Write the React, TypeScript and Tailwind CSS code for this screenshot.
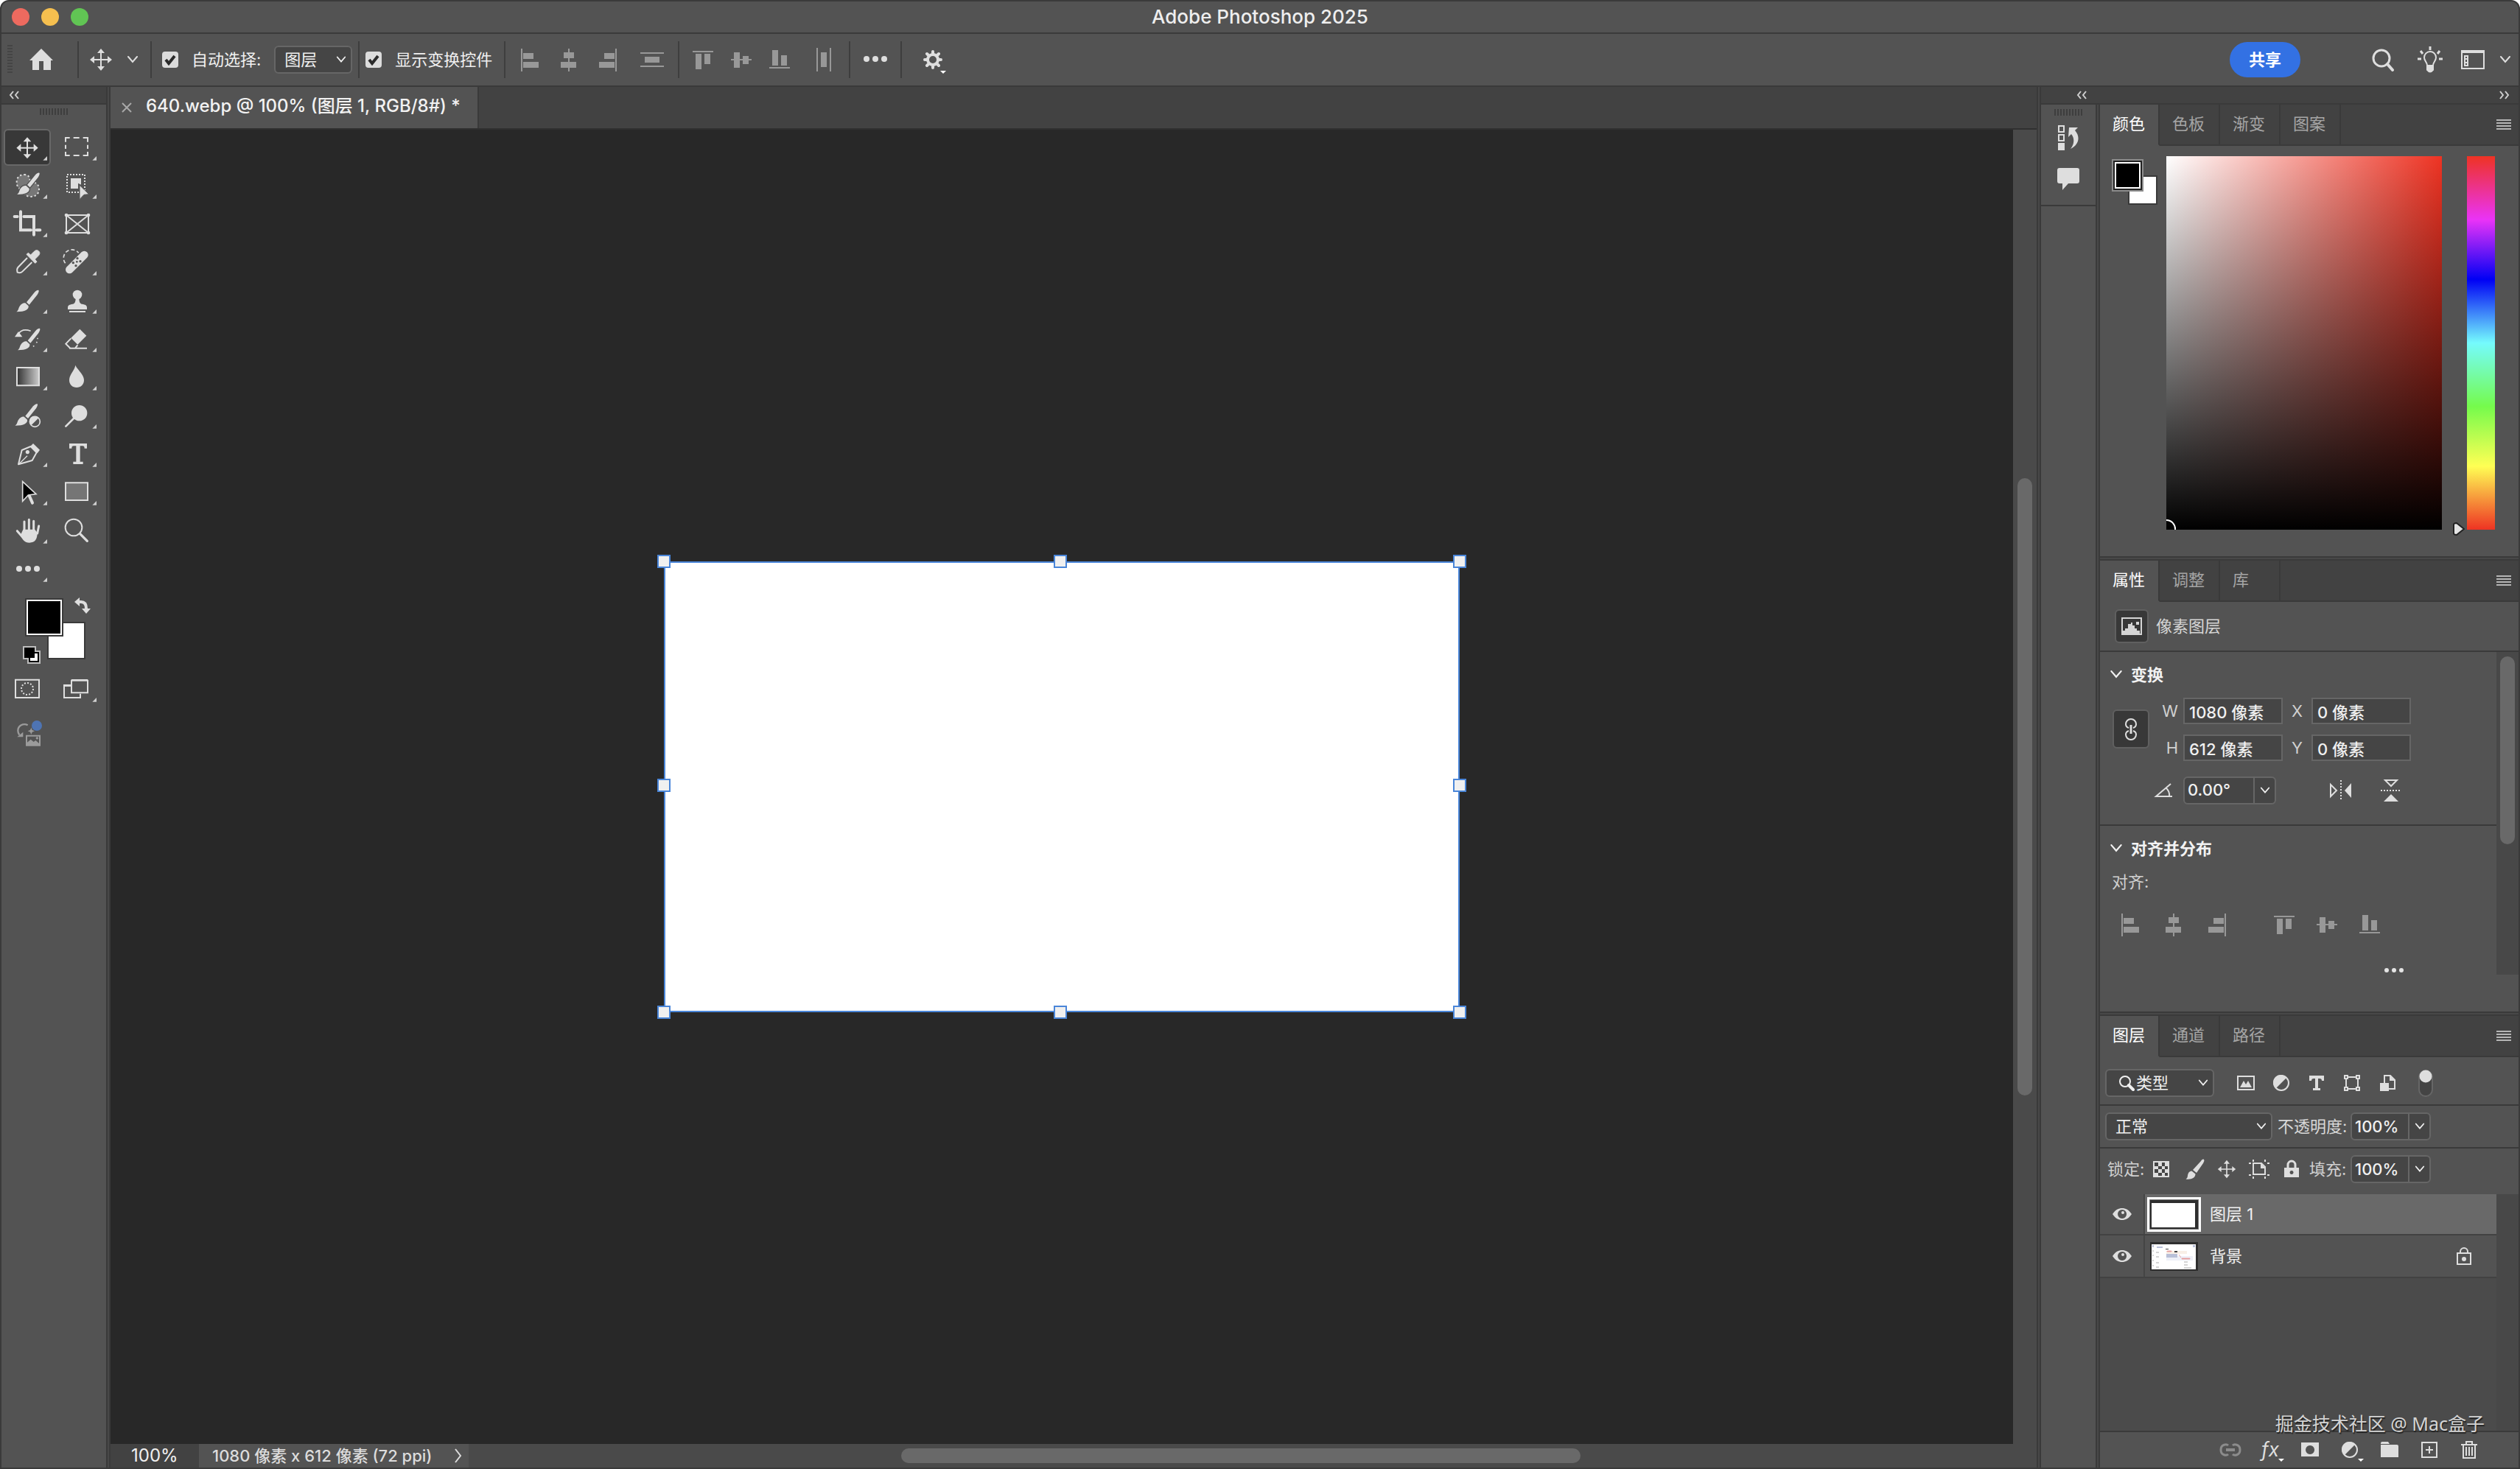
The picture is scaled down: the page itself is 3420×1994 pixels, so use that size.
import { useState } from 'react';
import type { ReactNode } from 'react';
import clsx from 'clsx';

type IconProps = { children: ReactNode; className?: string };

// 32x32 drawing used by the bars and the panels
function Icon({ children, className }: IconProps) {
  return (
    <svg viewBox="0 0 32 32" className={clsx('size-8 shrink-0', className)} fill="currentColor" aria-hidden="true">
      {children}
    </svg>
  );
}

function Chevron({ className }: { className?: string }) {
  return (
    <svg viewBox="0 0 16 10" className={clsx('h-[10px] w-4 shrink-0', className)} fill="none" stroke="currentColor" strokeWidth="2" strokeLinecap="round" aria-hidden="true">
      <path d="M2 1l6 7 6-7" />
    </svg>
  );
}

function DoubleChevron({ right }: { right?: boolean }) {
  return (
    <svg viewBox="0 0 14 12" className="h-3 w-[14px] text-[#d0d0d0]" fill="none" stroke="currentColor" strokeWidth="2" aria-hidden="true">
      {right ? <path d="M1 1l4 5-4 5M8 1l4 5-4 5" /> : <path d="M6 1L2 6l4 5M13 1L9 6l4 5" />}
    </svg>
  );
}

function Grip() {
  return <div className="mx-auto h-[9px] w-[38px] bg-[repeating-linear-gradient(to_right,#3e3e3e_0_2px,transparent_2px_4px)]" />;
}

const MovePath = () => (
  <>
    <path d="M16 4v24M4 16h24" stroke="currentColor" strokeWidth="2" />
    <path d="M16 1l5 6H11zM16 31l5-6H11zM1 16l6-5v10zM31 16l-6-5v10z" />
  </>
);

const alignIcons = {
  left: <path d="M3 1h2v31H3zM6 7h14v8H6zM6 19h21v8H6z" />,
  centerH: <path d="M15 1h2v5h6v8h-6v5h9v8h-9v5h-2v-5H5v-8h10v-5H9V6h6z" />,
  right: <path d="M27 1h2v31h-2zM12 7h14v8H12zM5 19h21v8H5z" />,
  distV: <path d="M0 6h32v2H0zM6 12h20v8H6zM0 24h32v2H0z" />,
  top: <path d="M2 4h28v2H2zM6 8h8v21H6zM18 8h8v14h-8z" />,
  centerV: <path d="M6 6h8v9h4v-4h8v4h4v2h-4v5h-8v-5h-4v10H6V17H2v-2h4z" />,
  bottom: <path d="M2 26h28v2H2zM6 3h8v21H6zM18 10h8v14h-8z" />,
  distH: <path d="M6 0h2v32H6zM24 0h2v32h-2zM12 6h8v20h-8z" />,
};

const HalfCircle = () => (
  <>
    <circle cx="16" cy="16" r="10" fill="none" stroke="currentColor" strokeWidth="2" />
    <path d="M23 9A10 10 0 1 0 9 23z" />
  </>
);

const TypeGlyph = () => (
  <path d="M6 6h20v7h-3c0-2-1-3-3-3h-2v13h3v3H11v-3h3V10h-2c-2 0-3 1-3 3H6z" />
);

const BrushGlyph = () => (
  <path d="M29 3c1 1 0 3-1 5l-9 13-5-4L25 5c1-2 3-3 4-2zM12.500 18.500l5 4c0 5-5 8-13 7 3-2 2-4 3-7 1-3 3-4 5-4z" />
);

/* ---------- tools ---------- */

// Tool drawings live on a 192x156 grid, one grid per cell
const toolBrush = (
  <>
    <path d="M145 26c-3-2-10 2-17 9l-32 40 11 10 33-41c5-8 8-16 5-18z" />
    <path d="M91 78l13 12c2 14-12 24-50 24 10-6 8-14 14-23 6-9 14-14 23-13z" />
  </>
);

type Tool = { name: string; icon: ReactNode; flyout?: boolean };

const tools: Tool[] = [
  {
    name: '移动工具',
    flyout: true,
    icon: (
      <>
        <path d="M96 50v60M66 80h60" stroke="currentColor" strokeWidth="6" />
        <path d="M96 37l16 18H80zM96 124l16-18H80zM52 80l18-16v32zM140 80l-18-16v32z" />
      </>
    ),
  },
  {
    name: '矩形选框工具',
    flyout: true,
    icon: <path d="M51 56V39h17M83 39h24M122 39h19v17M141 68v16M141 96v15h-19M107 111H83M68 111H51V96M51 84V68" fill="none" stroke="currentColor" strokeWidth="6" />,
  },
  {
    name: '选择画笔工具',
    flyout: true,
    icon: (
      <>
        <path d="M83 33c20 0 26 14 23 30 20-2 38 8 38 28s-14 32-34 32-32-14-34-30C58 92 53 78 53 62s12-29 30-29z" fill="#777" stroke="currentColor" strokeWidth="6" strokeDasharray="7 9" />
        <g stroke="#535353" strokeWidth="8" paintOrder="stroke">{toolBrush}</g>
      </>
    ),
  },
  {
    name: '对象选择工具',
    flyout: true,
    icon: (
      <>
        <path d="M57 33h72v72H57z" fill="none" stroke="currentColor" strokeWidth="6" strokeDasharray="6 6" />
        <path d="M72 48h42v26l-12-6v22H72z" />
        <path d="M108 76l38 37-20 2-18 19z" stroke="#535353" strokeWidth="3" />
      </>
    ),
  },
  {
    name: '裁剪工具',
    flyout: true,
    icon: <path d="M69 28v75h42M134 103h14M44 48h12M82 48h41v74" fill="none" stroke="currentColor" strokeWidth="12" strokeLinecap="round" />,
  },
  {
    name: '图框工具',
    icon: (
      <>
        <path d="M54 42h90v72H54zM54 42l90 72M144 42l-90 72" fill="none" stroke="currentColor" strokeWidth="6" />
        <circle cx="54" cy="42" r="7" /><circle cx="144" cy="42" r="7" /><circle cx="54" cy="114" r="7" /><circle cx="144" cy="114" r="7" />
      </>
    ),
  },
  {
    name: '吸管工具',
    flyout: true,
    icon: (
      <>
        <path d="M96 60L58 99c-6 7-4 12-2 20 7 3 14 3 20-3l39-38" fill="none" stroke="currentColor" strokeWidth="6" />
        <path d="M93 46l7-6 10 8 14-14c7-7 14-6 19-1s5 12-2 19l-14 14 8 10-7 6z" strokeLinejoin="round" stroke="currentColor" strokeWidth="3" />
      </>
    ),
  },
  {
    name: '污点修复画笔工具',
    flyout: true,
    icon: (
      <>
        <path d="M50 82a34 34 0 1 1 54-42" fill="none" stroke="currentColor" strokeWidth="5" strokeDasharray="15 9" />
        <path d="M67 108l60-60" stroke="currentColor" strokeWidth="32" strokeLinecap="round" />
        <g fill="#535353"><circle cx="99" cy="62" r="5" /><circle cx="111" cy="74" r="5" /><circle cx="82" cy="80" r="5" /><circle cx="97" cy="76" r="4" /><circle cx="93" cy="92" r="5" /></g>
      </>
    ),
  },
  { name: '画笔工具', flyout: true, icon: <g transform="translate(-3 10)">{toolBrush}</g> },
  {
    name: '仿制图章工具',
    flyout: true,
    icon: (
      <>
        <circle cx="99" cy="54" r="19" />
        <path d="M92 68h14c0 12 2 22 12 24 14 2 20 6 20 14v8H60v-8c0-8 6-12 20-14 10-2 12-12 12-24z" />
        <path d="M66 123h66" stroke="currentColor" strokeWidth="6" />
      </>
    ),
  },
  {
    name: '历史记录画笔工具',
    flyout: true,
    icon: (
      <>
        <g transform="translate(2 10)">{toolBrush}</g>
        <path d="M60 58c10-16 28-20 50-12" fill="none" stroke="currentColor" strokeWidth="5" />
        <path d="M45 70l15-22 16 22z" />
        <path d="M138 74v8M136 90l-4 6M124 106l-8 6" stroke="currentColor" strokeWidth="5" strokeDasharray="5 5" />
      </>
    ),
  },
  {
    name: '橡皮擦工具',
    flyout: true,
    icon: (
      <>
        <path d="M109 38l27 27-36 36-27-27z" />
        <path d="M73 76L52 98l18 18h20l10-13M66 116h72" fill="none" stroke="currentColor" strokeWidth="6" />
      </>
    ),
  },
  {
    name: '渐变工具',
    flyout: true,
    icon: (
      <>
        <defs>
          <linearGradient id="toolGradient"><stop offset="0" stopColor="#333" /><stop offset="1" stopColor="#ccc" /></linearGradient>
        </defs>
        <path d="M54 39h90v73H54z" fill="url(#toolGradient)" stroke="currentColor" strokeWidth="6" />
      </>
    ),
  },
  { name: '模糊工具', flyout: true, icon: <path d="M91 29c6 16 35 38 35 61 0 18-13 30-30 30S66 108 66 90c0-23 22-40 25-61z" /> },
  {
    name: '调整画笔工具',
    icon: (
      <>
        <g transform="translate(-8 5)">{toolBrush}</g>
        <circle cx="127" cy="103" r="25" fill="#535353" />
        <circle cx="127" cy="103" r="21" fill="none" stroke="currentColor" strokeWidth="5" />
        <path d="M141 89a20 20 0 1 0-28 28z" />
      </>
    ),
  },
  {
    name: '减淡工具',
    flyout: true,
    icon: (
      <>
        <circle cx="107" cy="68" r="32" />
        <path d="M52 122l32-32" stroke="currentColor" strokeWidth="8" strokeLinecap="round" />
      </>
    ),
  },
  {
    name: '钢笔工具',
    flyout: true,
    icon: (
      <>
        <path d="M60 121l14-58 36-15 24 25-18 32z" fill="none" stroke="currentColor" strokeWidth="6" strokeLinejoin="round" />
        <path d="M120 36l27 26-10 14-29-28zM97 79a8 8 0 1 1 .100 0z" />
        <path d="M62 120l34-34" stroke="currentColor" strokeWidth="4" />
      </>
    ),
  },
  { name: '文字工具', flyout: true, icon: <path d="M66 36h72v20h-10c0-7-2-10-8-10h-10v64h12v10H82v-10h12V46H84c-6 0-8 3-8 10H66z" /> },
  {
    name: '路径选择工具',
    flyout: true,
    icon: (
      <>
        <path d="M102 88l15 34" stroke="currentColor" strokeWidth="12" strokeLinecap="round" />
        <path d="M77 35l55 51-32 4-23 25z" fill="#000" stroke="currentColor" strokeWidth="5" />
      </>
    ),
  },
  { name: '矩形工具', flyout: true, icon: <path d="M51 40h90v71H51z" fill="#757575" stroke="currentColor" strokeWidth="6" /> },
  {
    name: '抓手工具',
    flyout: true,
    icon: (
      <>
        <path d="M84 84V42M103 84V34M122 84V40M137 90l6-30M76 104L55 80" stroke="currentColor" strokeWidth="9" strokeLinecap="round" />
        <path d="M79 74h48l10 14c0 26-10 40-32 40-20 0-30-12-36-32z" />
      </>
    ),
  },
  {
    name: '缩放工具',
    icon: (
      <>
        <circle cx="84" cy="66" r="34" fill="none" stroke="currentColor" strokeWidth="6" />
        <path d="M110 92l29 29" stroke="currentColor" strokeWidth="10" strokeLinecap="round" />
      </>
    ),
  },
  { name: '编辑工具栏', flyout: true, icon: <><circle cx="63" cy="78" r="12" /><circle cx="99" cy="78" r="12" /><circle cx="135" cy="78" r="12" /></> },
];

const screenTools: Tool[] = [
  {
    name: '快速蒙版',
    icon: (
      <>
        <path d="M48 41h96v73H48z" fill="none" stroke="currentColor" strokeWidth="6" />
        <circle cx="96" cy="78" r="24" fill="none" stroke="currentColor" strokeWidth="6" strokeDasharray="6 6.500" />
      </>
    ),
  },
  {
    name: '屏幕模式',
    flyout: true,
    icon: <path d="M75 44h66v50H75zM72 63H45v51h66V98M75 42h66M45 66h27" fill="none" stroke="currentColor" strokeWidth="6" />,
  },
];

function ToolCell({ tool, selected, onSelect }: { tool: Tool; selected?: boolean; onSelect?: () => void }) {
  return (
    <button
      type="button"
      aria-label={tool.name}
      onClick={onSelect}
      className={clsx('my-px h-[50px] w-16 rounded-md border-2', selected ? 'border-[#686868] bg-[#383838]' : 'border-transparent')}
    >
      <svg viewBox="6 9 180 138" className="h-[46px] w-[60px]" fill="currentColor" aria-hidden="true">
        {tool.icon}
        {tool.flyout && <path d="M177 114v17h-17z" fill="#cfcfcf" />}
      </svg>
    </button>
  );
}

function Toolbox() {
  const [active, setActive] = useState('移动工具');

  return (
    <aside className="flex w-[142px] shrink-0 flex-col bg-[#535353] text-[#dedede]">
      <div className="flex h-6 items-center border-b-2 border-[#3a3a3a] bg-[#424242] pl-2.5">
        <DoubleChevron />
      </div>
      <div className="py-[5px]"><Grip /></div>
      <div className="mt-[13px] grid grid-cols-[67px_64px] pl-[3px]">
        {tools.map((tool) => (
          <ToolCell key={tool.name} tool={tool} selected={active === tool.name} onSelect={() => setActive(tool.name)} />
        ))}
      </div>
      <button type="button" aria-label="前景色和背景色" className="h-[111px] w-[142px]">
        <svg viewBox="2 798 142 111" className="h-[111px] w-[142px]" aria-hidden="true">
          <path d="M64 844h52v51H64z" fill="#3a3a3a" />
          <path d="M66 846h48v47H66z" fill="#fff" />
          <path d="M34 812h52v52H34z" fill="#3a3a3a" />
          <path d="M36 814h48v48H36z" fill="#fff" />
          <path d="M38 816h44v44H38z" />
          <path d="M107 817h3q7 0 7 9v3" fill="none" stroke="#dedede" strokeWidth="4" />
          <path d="M101 817l7-6v12zM117 833l-6-7h12z" fill="#dedede" />
          <path d="M31 877h18v6h6v18H37v-6h-6z" fill="#bdbdbd" />
          <path d="M39 885h14v14H39z" />
          <path d="M41 887h10v10H41z" fill="#fff" />
          <path d="M33 879h14v14H33z" />
        </svg>
      </button>
      <div className="grid grid-cols-[67px_64px] pl-[3px]">
        {screenTools.map((tool) => <ToolCell key={tool.name} tool={tool} />)}
      </div>
      <button type="button" aria-label="生成式图像" className="mt-2 ml-[3px] h-[52px] w-16">
        <svg viewBox="0 0 192 156" className="h-[52px] w-16" fill="#9b9b9b" aria-hidden="true">
          <path d="M98 46c-18-10-40 2-40 22 0 8 2 12 6 18" fill="none" stroke="#9b9b9b" strokeWidth="7" />
          <path d="M55 94h24V74z" />
          <path d="M112 56l4 10 10 4-10 4-4 10-4-10-10-4 10-4z" />
          <path d="M90 86h60v45H90zM96 92v24l14-12 12 10 8-6 14 12V92zM136 94a5 5 0 1 1-.100 0z" fillRule="evenodd" />
          <circle cx="135" cy="48" r="21" fill="#4e74b3" />
        </svg>
      </button>
    </aside>
  );
}

/* ---------- options bar ---------- */

function Divider() {
  return <div className="h-[50px] w-0.5 shrink-0 bg-[#3e3e3e]" />;
}

function IconButton({ label, className, children }: { label: string; className: string; children: ReactNode }) {
  return (
    <button type="button" aria-label={label} className={clsx('flex h-10 shrink-0 items-center justify-center', className)}>
      {children}
    </button>
  );
}

function CheckBox({ id, label }: { id: string; label: string }) {
  return (
    <div className="flex shrink-0 items-center gap-[18px]">
      <span className="grid">
        <input id={id} type="checkbox" defaultChecked className="peer col-start-1 row-start-1 size-[22px] appearance-none rounded bg-[#dcdcdc]" />
        <svg viewBox="0 0 22 22" className="pointer-events-none invisible col-start-1 row-start-1 size-[22px] peer-checked:visible" fill="none" stroke="#2b2b2b" strokeWidth="4" aria-hidden="true">
          <path d="M5 11l4 5 8-10" />
        </svg>
      </span>
      <label htmlFor={id} className="text-[22px] leading-8 whitespace-nowrap text-[#f0f0f0]">{label}</label>
    </div>
  );
}

function SelectBox({ label, options, className, icon }: { label: string; options: string[]; className: string; icon?: ReactNode }) {
  return (
    <div className={clsx('flex h-[38px] shrink-0 items-center rounded-md border-2 border-[#666] bg-[#454545] text-[#f0f0f0]', className)}>
      {icon}
      <select aria-label={label} className="min-w-0 flex-1 appearance-none bg-transparent text-[22px] leading-8 outline-none">
        {options.map((option) => <option key={option}>{option}</option>)}
      </select>
      <Chevron className="h-[9px] w-[14px]" />
    </div>
  );
}

function OptionsBar() {
  return (
    <div className="flex h-[72px] shrink-0 items-center border-b-2 border-[#3a3a3a] bg-[#535353] text-[#dedede]">
      <div className="ml-2 h-10 w-[7px] bg-[repeating-linear-gradient(to_bottom,#454545_0_2px,transparent_2px_4px)]" />
      <IconButton label="主页" className="ml-[11px] w-[56px]">
        <Icon><path d="M16 1l16 16h-3v13H19V18h-6v12H4V17H0z" /></Icon>
      </IconButton>
      <div className="ml-[21px]"><Divider /></div>
      <IconButton label="移动工具预设" className="ml-3 w-9"><Icon><MovePath /></Icon></IconButton>
      <IconButton label="打开预设" className="ml-[13px] w-6"><Chevron /></IconButton>
      <div className="mr-[14px] ml-3"><Divider /></div>
      <CheckBox id="auto-select" label="自动选择:" />
      <div className="ml-[18px]"><SelectBox label="自动选择对象" options={['图层', '组']} className="w-[106px] pr-1.5 pl-3" /></div>
      <div className="mr-2 ml-2"><Divider /></div>
      <CheckBox id="show-transform" label="显示变换控件" />
      <div className="mr-2 ml-4"><Divider /></div>
      <div className="flex text-[#989898]">
        <IconButton label="左对齐" className="w-[52px]"><Icon>{alignIcons.left}</Icon></IconButton>
        <IconButton label="水平居中对齐" className="w-[52px]"><Icon>{alignIcons.centerH}</Icon></IconButton>
        <IconButton label="右对齐" className="w-[52px]"><Icon>{alignIcons.right}</Icon></IconButton>
        <IconButton label="垂直分布" className="w-[70px]"><Icon>{alignIcons.distV}</Icon></IconButton>
      </div>
      <div className="mr-1.5"><Divider /></div>
      <div className="flex text-[#989898]">
        <IconButton label="顶对齐" className="w-[52px]"><Icon>{alignIcons.top}</Icon></IconButton>
        <IconButton label="垂直居中对齐" className="w-[52px]"><Icon>{alignIcons.centerV}</Icon></IconButton>
        <IconButton label="底对齐" className="w-[52px]"><Icon>{alignIcons.bottom}</Icon></IconButton>
        <IconButton label="水平分布" className="w-[68px]"><Icon>{alignIcons.distH}</Icon></IconButton>
      </div>
      <Divider />
      <IconButton label="更多对齐选项" className="w-[68px]">
        <Icon><circle cx="4" cy="15" r="4" /><circle cx="16" cy="15" r="4" /><circle cx="28" cy="15" r="4" /></Icon>
      </IconButton>
      <Divider />
      <IconButton label="设置" className="ml-[26px] w-9">
        <svg viewBox="0 0 36 40" className="h-10 w-9" fill="currentColor" aria-hidden="true">
          <circle cx="16" cy="20" r="7" fill="none" stroke="currentColor" strokeWidth="4" />
          <path d="M16 9v3M16 28v3M5 20h3M24 20h3M8 12l2 2M22 26l2 2M24 12l-2 2M10 26l-2 2" stroke="currentColor" strokeWidth="4" strokeLinecap="round" />
          <path d="M26 35h8l-4 4z" fill="#fff" />
        </svg>
      </IconButton>

      <button type="button" className="ml-auto h-12 w-24 shrink-0 rounded-full bg-[#3371e3] text-[22px] leading-8 font-bold text-white">共享</button>
      <IconButton label="搜索" className="ml-[92px] w-10">
        <Icon><circle cx="14" cy="14" r="11" fill="none" stroke="currentColor" strokeWidth="3" /><path d="M22 22l7 8" stroke="currentColor" strokeWidth="4" strokeLinecap="round" /></Icon>
      </IconButton>
      <IconButton label="发现" className="ml-6 w-10">
        <svg viewBox="0 0 36 36" className="size-9" fill="none" stroke="currentColor" strokeWidth="2" aria-hidden="true">
          <path d="M14 26c0-5-4-6-4-11a8 8 0 0 1 16 0c0 5-4 6-4 11z" />
          <path d="M14 26h8v6q-4 5-8 0z" fill="currentColor" />
          <path d="M18 0v5M5 6l3 4M31 6l-3 4M1 17h5M30 17h5" strokeWidth="3" />
        </svg>
      </IconButton>
      <IconButton label="工作区" className="ml-[18px] w-10">
        <Icon>
          <path d="M1 4h30v24H1z" fill="none" stroke="currentColor" strokeWidth="2" />
          <path d="M0 3h32v4H0z" />
          <path d="M5 11h4v4H5zM5 15h4v5H5zM5 20h4v4H5z" fill="none" stroke="currentColor" strokeWidth="2" />
        </Icon>
      </IconButton>
      <IconButton label="工作区菜单" className="mr-1 ml-2.5 w-7"><Chevron /></IconButton>
    </div>
  );
}

/* ---------- document ---------- */

const handles = [
  '-top-[11px] -left-[11px]',
  '-top-[11px] left-1/2 -ml-[11px]',
  '-top-[11px] -right-[11px]',
  'top-1/2 -left-[11px] -mt-[11px]',
  'top-1/2 -right-[11px] -mt-[11px]',
  '-bottom-[11px] -left-[11px]',
  '-bottom-[11px] left-1/2 -ml-[11px]',
  '-bottom-[11px] -right-[11px]',
];

function Workspace() {
  return (
    <main className="flex min-w-0 flex-1 flex-col bg-[#4a4a4a]">
      <div className="flex h-[58px] shrink-0 border-b-2 border-[#303030] bg-[#424242]">
        <div className="flex w-[500px] items-center border-r-2 border-[#3a3a3a] bg-[#535353]">
          <button type="button" aria-label="关闭文档" className="ml-[15px] text-[#a8a8a8]">
            <svg viewBox="0 0 14 14" className="size-[14px]" stroke="currentColor" strokeWidth="2" aria-hidden="true"><path d="M1 1l12 12M13 1L1 13" /></svg>
          </button>
          <h1 className="ml-[19px] pb-1 text-[24px] leading-8 font-medium whitespace-nowrap text-[#f2f2f2]">
            640.webp @ 100% (图层 1, RGB/8#) *
          </h1>
        </div>
      </div>
      <div className="flex min-h-0 flex-1">
        <div className="flex flex-1 items-center justify-center bg-[#282828]">
          <div className="relative h-[612px] w-[1080px] border-2 border-[#4a86d9] bg-white">
            {handles.map((position) => (
              <span key={position} className={clsx('absolute size-[18px] border-2 border-[#4a86d9] bg-[#f0f0f0]', position)} />
            ))}
          </div>
        </div>
        <div className="flex w-8 flex-col justify-center bg-[#4a4a4a]">
          <div className="mx-auto h-[47%] w-5 rounded-full bg-[#696969]" />
        </div>
      </div>
      <footer className="flex h-8 shrink-0 items-center">
        <input aria-label="缩放级别" defaultValue="100%" className="h-8 w-[120px] bg-[#424242] pl-7 text-[24px] text-[#f0f0f0] outline-none" />
        <button type="button" className="flex h-8 w-[366px] items-center justify-between bg-[#535353] pr-2 pl-[18px] text-[22px] leading-8 font-medium whitespace-nowrap text-[#dcdcdc]">
          1080 像素 x 612 像素 (72 ppi)
          <svg viewBox="0 0 12 20" className="h-5 w-3" fill="none" stroke="currentColor" strokeWidth="2" aria-hidden="true"><path d="M2 1l7 9-7 9" /></svg>
        </button>
        <div className="mr-8 flex-1">
          <div className="mx-auto h-5 w-[44%] rounded-full bg-[#696969]" />
        </div>
      </footer>
    </main>
  );
}

/* ---------- panels ---------- */

function PanelTabs({ tabs }: { tabs: string[] }) {
  const [active, setActive] = useState(tabs[0]);

  return (
    <div role="tablist" className="flex h-14 shrink-0 bg-[#424242]">
      {tabs.map((tab) => (
        <button
          key={tab}
          type="button"
          role="tab"
          aria-selected={tab === active}
          onClick={() => setActive(tab)}
          className={clsx(
            'w-[82px] border-r-2 border-b-2 border-r-[#3a3a3a] pb-0.5 pl-[17px] text-left text-[22px] leading-8 first:w-[81px]',
            tab === active ? 'border-b-[#535353] bg-[#535353] text-white' : 'border-b-[#3a3a3a] text-[#a5a5a5]',
          )}
        >
          {tab}
        </button>
      ))}
      <div className="flex flex-1 items-center justify-end border-b-2 border-[#3a3a3a] pr-2.5">
        <button type="button" aria-label="面板菜单" className="text-[#b5b5b5]">
          <svg viewBox="0 0 20 14" className="h-[14px] w-5" fill="currentColor" aria-hidden="true"><path d="M0 0h20v2H0zM0 4h20v2H0zM0 8h20v2H0zM0 12h20v2H0z" /></svg>
        </button>
      </div>
    </div>
  );
}

function PanelGap() {
  return <div className="h-1.5 shrink-0 border-y-2 border-[#3a3a3a] bg-[#484848]" />;
}

function ColorPanel() {
  return (
    <section className="flex min-h-0 flex-1 flex-col">
      <PanelTabs tabs={['颜色', '色板', '渐变', '图案']} />
      <div className="flex min-h-0 flex-1 pt-[14px] pr-8 pb-9 pl-4">
        <button type="button" aria-label="前景色" className="mt-1 mr-3 size-[62px] shrink-0">
          <svg viewBox="0 0 62 62" className="size-[62px]" aria-hidden="true">
            <path d="M22 22h40v40H22z" fill="#3a3a3a" />
            <path d="M24 24h36v36H24z" fill="#fff" />
            <path d="M0 0h43v44H0z" fill="#8c8c8c" />
            <path d="M2 2h39v40H2z" fill="#222" />
            <path d="M4 4h35v36H4z" fill="#fff" />
            <path d="M6 6h31v32H6z" />
          </svg>
        </button>
        <div className="flex min-w-0 flex-1 items-end bg-[linear-gradient(to_top,#000,transparent),linear-gradient(to_right,#fff,#ee3323)]">
          <svg viewBox="0 0 14 14" className="size-[14px]" fill="none" stroke="#fff" strokeWidth="2" aria-hidden="true"><path d="M0 1a12 12 0 0 1 12 13" /></svg>
        </div>
        <div className="flex w-[34px] items-end justify-end pr-[3px]">
          <svg viewBox="0 0 16 18" className="-mb-2 h-[18px] w-4" fill="#e4e4e4" stroke="#222" strokeWidth="2" aria-hidden="true"><path d="M1 3q0-2 4-2l10 8-10 8q-4 0-4-2z" /></svg>
        </div>
        <div className="w-[38px] bg-[linear-gradient(to_bottom,#ee3323,#ea33f7_17%,#0000f5_33%,#75fbfd_50%,#75fb4c_67%,#ffff54_83%,#ee3323)]" />
      </div>
    </section>
  );
}

function Field({ id, label, value, labelClass }: { id: string; label: string; value: string; labelClass: string }) {
  return (
    <>
      <label htmlFor={id} className={clsx('text-[22px] leading-8 text-[#d0d0d0]', labelClass)}>{label}</label>
      <input id={id} defaultValue={value} className="h-9 w-[135px] border-2 border-[#666] bg-[#454545] px-1.5 text-[22px] font-medium text-[#f0f0f0] outline-none" />
    </>
  );
}

function ComboField({ id, label, value, className }: { id: string; label: string; value: string; className: string }) {
  return (
    <div className={clsx('flex shrink-0 overflow-hidden rounded-md border-2 border-[#666] bg-[#454545] text-[#f0f0f0]', className)}>
      <input id={id} aria-label={label} defaultValue={value} className="min-w-0 flex-1 bg-transparent pl-1 text-[22px] font-medium outline-none" />
      <button type="button" aria-label={`${label}选项`} className="flex w-[29px] items-center justify-center border-l-2 border-[#666]">
        <Chevron className="h-[9px] w-[14px]" />
      </button>
    </div>
  );
}

function SectionTitle({ children }: { children: ReactNode }) {
  return (
    <h2 className="flex h-[62px] items-center gap-[11px] pl-[13px] text-[22px] leading-8 font-bold text-[#f2f2f2]">
      <Chevron className="h-[11px] w-[18px]" />
      {children}
    </h2>
  );
}

function PropertiesPanel() {
  return (
    <section className="flex min-h-0 flex-1 flex-col">
      <PanelTabs tabs={['属性', '调整', '库']} />
      <div className="flex h-[68px] shrink-0 items-center gap-2.5 border-b-2 border-[#3a3a3a] pl-5 text-[22px] leading-8 text-[#d5d5d5]">
        <span className="flex h-[46px] w-[46px] items-center justify-center rounded-md border-2 border-[#606060] bg-[#383838]">
          <svg viewBox="0 0 28 24" className="h-6 w-7" fill="currentColor" aria-hidden="true">
            <path d="M1 1h26v22H1z" fill="none" stroke="currentColor" strokeWidth="2" />
            <path d="M2 18h3v-3h4V9h4V7h2v4h3v4h3v3h4v5H2zM20 6h4v4h-4z" />
          </svg>
        </span>
        像素图层
      </div>
      <div className="flex min-h-0 flex-1">
        <div className="min-w-0 flex-1">
          <div className="border-b-2 border-[#3a3a3a] pb-[26px]">
            <SectionTitle>变换</SectionTitle>
            <div className="flex items-center pl-[17px]">
              <button type="button" aria-label="链接宽高" className="flex h-[53px] w-[50px] items-center justify-center rounded-md border-2 border-[#606060] bg-[#383838] text-[#dedede]">
                <svg viewBox="0 0 16 30" className="h-[30px] w-4" fill="none" stroke="currentColor" strokeWidth="2" aria-hidden="true">
                  <path d="M5 13c-3-1-4-3-4-5a7 7 0 0 1 14 0c0 2-1 4-4 5M5 17c-3 1-4 3-4 5a7 7 0 0 0 14 0c0-2-1-4-4-5" />
                  <path d="M8 9v12" strokeWidth="3" />
                </svg>
              </button>
              <div className="flex flex-col gap-[14px]">
                <div className="flex items-center">
                  <Field id="prop-w" label="W" value="1080 像素" labelClass="w-[46px] pr-[7px] text-right" />
                  <Field id="prop-x" label="X" value="0 像素" labelClass="w-[39px] pl-1 pr-1 text-center" />
                </div>
                <div className="flex items-center">
                  <Field id="prop-h" label="H" value="612 像素" labelClass="w-[46px] pr-[7px] text-right" />
                  <Field id="prop-y" label="Y" value="0 像素" labelClass="w-[39px] pl-1 pr-1 text-center" />
                </div>
              </div>
            </div>
            <div className="mt-5 flex items-center pl-[72px] text-[#dedede]">
              <Icon className="mr-[9px]">
                <path d="M26 24H4L24 7M17 12q6 5 5 12" fill="none" stroke="currentColor" strokeWidth="2" />
              </Icon>
              <ComboField id="prop-angle" label="角度" value="0.00°" className="h-[38px] w-[126px]" />
              <IconButton label="水平翻转" className="ml-[68px] w-10">
                <Icon><path d="M2 8l8 8-8 8z" fill="none" stroke="currentColor" strokeWidth="2" /><path d="M30 6v20l-9-10z" /><path d="M16 2v28" stroke="currentColor" strokeWidth="2" strokeDasharray="2 2" /></Icon>
              </IconButton>
              <IconButton label="垂直翻转" className="ml-7 w-10">
                <Icon><path d="M8 2h16l-8 8z" fill="none" stroke="currentColor" strokeWidth="2" /><path d="M6 31h20l-10-10z" /><path d="M2 16h28" stroke="currentColor" strokeWidth="2" strokeDasharray="2 2" /></Icon>
              </IconButton>
            </div>
          </div>
          <SectionTitle>对齐并分布</SectionTitle>
          <p className="pl-4 text-[22px] leading-7 text-[#d0d0d0]">对齐:</p>
          <div className="mt-6 flex pl-[13px] text-[#989898]">
            <IconButton label="左对齐" className="w-[58px]"><Icon>{alignIcons.left}</Icon></IconButton>
            <IconButton label="水平居中对齐" className="w-[58px]"><Icon>{alignIcons.centerH}</Icon></IconButton>
            <IconButton label="右对齐" className="w-[58px]"><Icon>{alignIcons.right}</Icon></IconButton>
            <IconButton label="顶对齐" className="ml-[34px] w-[58px]"><Icon>{alignIcons.top}</Icon></IconButton>
            <IconButton label="垂直居中对齐" className="w-[58px]"><Icon>{alignIcons.centerV}</Icon></IconButton>
            <IconButton label="底对齐" className="w-[58px]"><Icon>{alignIcons.bottom}</Icon></IconButton>
          </div>
          <div className="mt-[22px] flex justify-end pr-[119px] text-[#e4e4e4]">
            <IconButton label="更多选项" className="w-10">
              <Icon><circle cx="6" cy="16" r="3" /><circle cx="16" cy="16" r="3" /><circle cx="26" cy="16" r="3" /></Icon>
            </IconButton>
          </div>
        </div>
        <div className="mb-[50px] w-[30px] bg-[#484848] px-[5px] pt-1.5">
          <div className="h-[59%] rounded-full bg-[#696969]" />
        </div>
      </div>
    </section>
  );
}

function Eye() {
  return (
    <svg viewBox="0 0 26 18" className="h-[18px] w-[26px]" fill="currentColor" aria-hidden="true">
      <path fillRule="evenodd" d="M0 9C4 3 8 1 13 1s9 2 13 8c-4 6-8 8-13 8S4 15 0 9zM13 3a6 6 0 1 0 .100 0z" />
      <circle cx="13" cy="9" r="4.500" fill="#535353" />
      <circle cx="14" cy="7" r="2" />
    </svg>
  );
}

function LayersPanel() {
  return (
    <section className="flex min-h-0 flex-1 flex-col">
      <PanelTabs tabs={['图层', '通道', '路径']} />
      <div className="flex h-[66px] shrink-0 items-center border-b-2 border-[#3a3a3a] pt-1.5 pl-[7px] text-[#dedede]">
        <SelectBox
          label="图层过滤类型"
          options={['类型', '名称', '效果']}
          className="w-[148px] pr-1.5 pl-4"
          icon={<svg viewBox="0 0 22 22" className="mr-0.5 size-[22px] shrink-0" fill="none" stroke="currentColor" strokeWidth="2" aria-hidden="true"><circle cx="9" cy="9" r="7" /><path d="M14 14l6 6" strokeWidth="4" strokeLinecap="round" /></svg>}
        />
        <div className="ml-[19px] flex">
          <IconButton label="像素图层" className="w-12"><Icon><path d="M5 7h22v18H5z" fill="none" stroke="currentColor" strokeWidth="2" /><path d="M8 22l5-9 3 5 3-5 5 9z" /></Icon></IconButton>
          <IconButton label="调整图层" className="w-12"><Icon><HalfCircle /></Icon></IconButton>
          <IconButton label="文字图层" className="w-12"><Icon><TypeGlyph /></Icon></IconButton>
          <IconButton label="形状图层" className="w-12">
            <Icon><path d="M8 8h16v16H8z" fill="none" stroke="currentColor" strokeWidth="2" /><path d="M6 6h4v4H6zM22 6h4v4h-4zM6 22h4v4H6zM22 22h4v4h-4z" fill="#535353" stroke="currentColor" strokeWidth="2" /></Icon>
          </IconButton>
          <IconButton label="智能对象" className="w-12">
            <Icon><path d="M12 16V6h8l6 6v12h-8" fill="none" stroke="currentColor" strokeWidth="2" /><path d="M19 5v8h8zM6 16h12v11H6z" /></Icon>
          </IconButton>
          <IconButton label="过滤开关" className="ml-1 w-12">
            <svg viewBox="0 0 22 38" className="h-[38px] w-[22px]" aria-hidden="true">
              <rect x="2" y="2" width="18" height="35" rx="9" fill="#444" stroke="#666" strokeWidth="2" />
              <circle cx="11" cy="10" r="8.500" fill="#dedede" />
            </svg>
          </IconButton>
        </div>
      </div>
      <div className="flex h-[58px] shrink-0 items-center border-b-2 border-[#3a3a3a] pl-[7px]">
        <SelectBox label="混合模式" options={['正常', '溶解', '变暗']} className="w-[227px] pr-1.5 pl-3" />
        <label htmlFor="opacity" className="ml-[7px] w-[99px] shrink-0 text-[22px] leading-8 whitespace-nowrap text-[#d8d8d8]">不透明度:</label>
        <ComboField id="opacity" label="不透明度" value="100%" className="h-[38px] w-[109px]" />
      </div>
      <div className="flex h-[62px] shrink-0 items-center pb-1.5 pl-[10px] text-[#dedede]">
        <span className="w-[50px] text-[22px] leading-8 whitespace-nowrap text-[#d0d0d0]">锁定:</span>
        <IconButton label="锁定透明像素" className="w-[46px]">
          <Icon><path d="M5 5h22v22H5z" /><path d="M7 7h5v5H7zM17 7h4v5h-4zM12 12h5v4h-5zM21 12h4v4h-4zM7 16h5v5H7zM17 16h4v5h-4zM12 21h5v4h-5zM21 21h4v4h-4z" fill="#454545" /></Icon>
        </IconButton>
        <IconButton label="锁定图像像素" className="w-11"><Icon><BrushGlyph /></Icon></IconButton>
        <IconButton label="锁定位置" className="w-11"><Icon className="p-[3px]"><MovePath /></Icon></IconButton>
        <IconButton label="防止自动嵌套" className="w-11">
          <Icon>
            <path d="M8 8h11l5 5v10H8z" fill="none" stroke="currentColor" strokeWidth="2" />
            <path d="M18 8v7h7zM7 3h2v3H7zM23 3h2v3h-2zM7 26h2v3H7zM23 26h2v3h-2zM2 7h3v2H2zM2 23h3v2H2zM27 7h3v2h-3zM27 23h3v2h-3z" />
          </Icon>
        </IconButton>
        <IconButton label="锁定全部" className="w-11">
          <Icon><path d="M11 14v-4a5 5 0 0 1 10 0v4" fill="none" stroke="currentColor" strokeWidth="3" /><path fillRule="evenodd" d="M6 14h20v13H6zM16 18a2.500 2.500 0 1 0 .100 0z" /></Icon>
        </IconButton>
        <label htmlFor="fill" className="ml-0.5 w-[56px] shrink-0 text-[22px] leading-8 whitespace-nowrap text-[#d0d0d0]">填充:</label>
        <ComboField id="fill" label="填充" value="100%" className="h-[38px] w-[109px]" />
      </div>
      <div className="flex min-h-0 flex-1 bg-[#4b4b4b]">
        <ul className="min-w-0 flex-1 text-[22px] leading-8 text-[#f0f0f0]">
          <li className="flex h-[56px] border-b-2 border-[#424242] bg-[#535353]">
            <IconButton label="切换图层 1 可见性" className="h-full w-[61px] border-r-2 border-[#454545] text-[#dedede]"><Eye /></IconButton>
            <div className="flex flex-1 items-center bg-[#696969] pl-[3px]">
              <span className="mr-3 h-[47px] w-[73px] border-[3px] border-white bg-[#777] p-px">
                <span className="block size-full border-2 border-t-4 border-r-4 border-[#2e2e2e] bg-white" />
              </span>
              图层 1
            </div>
          </li>
          <li className="flex h-[58px] border-b-2 border-[#424242] bg-[#535353]">
            <IconButton label="切换背景可见性" className="h-full w-[61px] border-r-2 border-[#454545] text-[#dedede]"><Eye /></IconButton>
            <div className="flex flex-1 items-center pr-[32px] pl-[7px]">
              <svg viewBox="0 0 65 39" className="mr-4 h-[39px] w-[65px]" aria-hidden="true">
                <path d="M0 0h65v39H0z" fill="#2e2e2e" />
                <path d="M2 3h60v34H2z" fill="#fff" />
                <path d="M22 12h28v4H22z" fill="#f8efe6" />
                <path d="M22 19h36v6H22z" fill="#eef0f8" />
                <path d="M3 4h2v3H3zM9 6h8v2H9zM58 4h3v3h-3zM22 16h15v5H22z" fill="#b9c0d8" />
                <path d="M23 12h6v1h-6zM43 22h11v1H43zM39 17l3 4" fill="#d88" stroke="#e7a5a5" strokeWidth="1" />
                <path d="M33 12h4v2h-4zM21 9h4v1h-4z" fill="#444" />
                <path d="M3 12h2M3 18h2M3 25h2M3 32h2M8 14h4M8 20h4M8 28h4M8 34h4M46 27h5M46 31h5M46 35h10" stroke="#aaa" />
              </svg>
              <span className="flex-1">背景</span>
              <svg viewBox="0 0 24 26" className="h-[26px] w-6 text-[#dedede]" fill="none" stroke="currentColor" strokeWidth="2" aria-hidden="true">
                <path d="M3 9h18v15H3zM7 9V7a5 5 0 0 1 10 0v2" />
                <circle cx="12" cy="17" r="2" fill="currentColor" />
              </svg>
            </div>
          </li>
        </ul>
        <div className="w-[30px] bg-[#484848]" />
      </div>
      <div className="relative flex h-[50px] shrink-0 items-center justify-end border-t-2 border-[#3a3a3a] pr-10 text-[#dedede]">
        <p className="pointer-events-none absolute right-[46px] bottom-[42px] font-[Noto_Sans,Noto_Sans_CJK_SC,sans-serif] text-[25px] leading-[36px] whitespace-nowrap text-[#d4d4d4] [text-shadow:1px_2px_1px_#222]">
          掘金技术社区 @ Mac盒子
        </p>
        <IconButton label="链接图层" className="w-[54px] text-[#8c8c8c]">
          <Icon><path d="M13 10c-2-2-10-2-10 6s8 8 10 6M19 10c2-2 10-2 10 6s-8 8-10 6" fill="none" stroke="currentColor" strokeWidth="3" /><path d="M10 14h12v4H10z" /></Icon>
        </IconButton>
        <button type="button" aria-label="图层样式" className="relative h-10 w-[54px] text-[26px] leading-9 italic">
          fx
          <svg viewBox="0 0 8 4" className="absolute right-2 bottom-1 h-1 w-2" fill="#fff" aria-hidden="true"><path d="M0 0h8L4 4z" /></svg>
        </button>
        <IconButton label="添加蒙版" className="w-[54px]">
          <Icon><path fillRule="evenodd" d="M4 6h24v19H4zM16 10a6 6 0 1 0 .100 0z" /></Icon>
        </IconButton>
        <IconButton label="新建调整图层" className="relative w-[54px]">
          <Icon><HalfCircle /></Icon>
          <svg viewBox="0 0 8 4" className="absolute right-2 bottom-1 h-1 w-2" fill="#fff" aria-hidden="true"><path d="M0 0h8L4 4z" /></svg>
        </IconButton>
        <IconButton label="新建组" className="w-[54px]"><Icon><path d="M4 7q0-2 2-2h8l2 3H4zM4 9h22q2 0 2 2v15H4z" /></Icon></IconButton>
        <IconButton label="新建图层" className="w-[54px]"><Icon><path d="M6 6h20v20H6zM16 11v10M11 16h10" fill="none" stroke="currentColor" strokeWidth="2" /></Icon></IconButton>
        <IconButton label="删除图层" className="w-[54px]">
          <Icon><path d="M5 9h22M8 10v17h16V10M12 8V5h8v3M12 12v12M16 12v12M20 12v12" fill="none" stroke="currentColor" strokeWidth="2" /></Icon>
        </IconButton>
      </div>
    </section>
  );
}

function Dock() {
  return (
    <div className="flex w-[648px] shrink-0 flex-col">
      <div className="flex h-6 shrink-0 items-center justify-between border-b-2 border-[#3a3a3a] bg-[#424242] pr-3 pl-[48px]">
        <DoubleChevron />
        <DoubleChevron right />
      </div>
      <div className="flex min-h-0 flex-1">
        <nav className="w-[74px] shrink-0 bg-[#535353] text-[#dedede]">
          <div className="flex h-[138px] flex-col items-center border-b-2 border-[#3a3a3a] pt-1.5">
            <Grip />
            <button type="button" aria-label="历史记录" className="mt-[13px]">
              <svg viewBox="0 0 30 34" className="h-[34px] w-[30px]" fill="currentColor" aria-hidden="true">
                <path d="M2 1h7v8H2zM2 13h7v8H2z" fill="none" stroke="currentColor" strokeWidth="2" />
                <path d="M1 24h9v10H1zM16 3h12l-4 4c8 9 5 20-6 25 5-6 6-14 1-20l-4 4z" />
              </svg>
            </button>
            <button type="button" aria-label="注释" className="mt-6">
              <svg viewBox="0 0 30 30" className="size-[30px]" fill="currentColor" aria-hidden="true"><path d="M3 0h24q3 0 3 3v15q0 3-3 3H15l-8 9v-9H3q-3 0-3-3V3q0-3 3-3z" /></svg>
            </button>
          </div>
        </nav>
        <div className="w-1.5 shrink-0 border-x-2 border-[#3a3a3a] bg-[#484848]" />
        <div className="flex min-w-0 flex-1 flex-col bg-[#535353]">
          <ColorPanel />
          <PanelGap />
          <PropertiesPanel />
          <PanelGap />
          <LayersPanel />
        </div>
      </div>
    </div>
  );
}

export default function App() {
  return (
    <div className="h-screen bg-white">
      <div className="flex h-full flex-col overflow-hidden rounded-t-[12px] border-2 border-[#3a3a3a] bg-[#535353] font-[Inter,Noto_Sans_CJK_SC,sans-serif]">
        <header className="grid h-11 shrink-0 grid-cols-[1fr_auto_1fr] items-center border-b-2 border-[#3a3a3a]">
          <div className="flex gap-4 pl-[14px]">
            <button type="button" aria-label="关闭" className="size-6 rounded-full bg-[#ed6a5f]" />
            <button type="button" aria-label="最小化" className="size-6 rounded-full bg-[#f5bf4f]" />
            <button type="button" aria-label="缩放" className="size-6 rounded-full bg-[#61c554]" />
          </div>
          <p className="text-[26px] leading-8 font-medium text-[#eeeeee]">Adobe Photoshop 2025</p>
        </header>
        <OptionsBar />
        <div className="flex min-h-0 flex-1">
          <Toolbox />
          <div className="w-1.5 shrink-0 border-x-2 border-[#3a3a3a] bg-[#484848]" />
          <Workspace />
          <div className="w-1.5 shrink-0 border-x-2 border-[#3a3a3a] bg-[#484848]" />
          <Dock />
        </div>
      </div>
    </div>
  );
}
